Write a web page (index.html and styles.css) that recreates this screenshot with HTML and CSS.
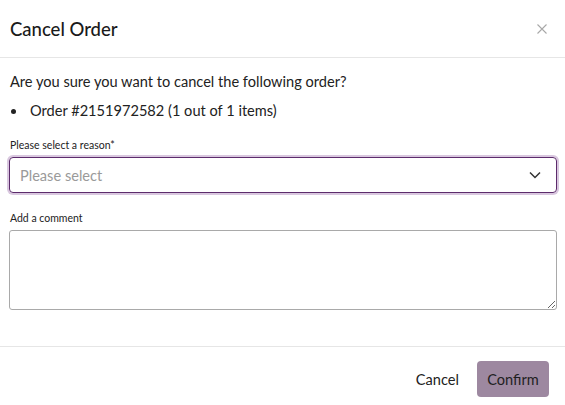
FILE: index.html
```html
<!DOCTYPE html>
<html>
<head>
<meta charset="utf-8">
<link rel="stylesheet" href="styles.css">
</head>
<body>
<div class="modal">
  <div class="header">
    <h1 class="title">Cancel Order</h1>
    <button class="close" aria-label="Close">
      <svg width="10" height="10" viewBox="0 0 10 10"><path d="M0.5 0.5 L9.5 9.5 M9.5 0.5 L0.5 9.5" stroke="#a8a8a8" stroke-width="1.1" fill="none"/></svg>
    </button>
  </div>
  <div class="body">
    <p class="question">Are you sure you want to cancel the following order?</p>
    <ul class="orders">
      <li><span class="dot"></span>Order #2151972582 (1 out of 1 items)</li>
    </ul>
    <label class="label">Please select a reason*</label>
    <div class="select">
      <span class="placeholder">Please select</span>
      <svg class="chev" width="12" height="8" viewBox="0 0 12 8"><path d="M1 1.5 L6 6.5 L11 1.5" stroke="#333" stroke-width="1.5" fill="none"/></svg>
    </div>
    <label class="label label2">Add a comment</label>
    <textarea class="comment"></textarea>
  </div>
  <div class="footer">
    <button class="btn cancel">Cancel</button>
    <button class="btn confirm">Confirm</button>
  </div>
</div>
</body>
</html>
```
FILE: styles.css
```css
* { box-sizing: border-box; }
html, body { margin: 0; padding: 0; background: #fff; }
body { font-family: Lato, "Noto Sans", sans-serif; color: #1f1f1f; width: 565px; height: 405px; overflow: hidden; }
.modal { width: 565px; }
.header { height: 58px; border-bottom: 1px solid #e6e6e6; display: flex; align-items: center; justify-content: space-between; padding: 0 18px 0 10px; }
.title { margin: 0; font-size: 18.5px; font-weight: 500; color: #1a1a1a; }
.close { background: none; border: 0; padding: 0; display: flex; }
.body { padding: 15px 8px 0 9px; height: 289px; border-bottom: 1px solid #e6e6e6; }
.question { margin: 0; font-size: 14.6px; line-height: 18px; padding-left: 1px; color: #222; }
.orders { margin: 11px 0 0; padding: 0; list-style: none; font-size: 14.6px; line-height: 18px; color: #222; }
.orders li { display: flex; align-items: center; }
.dot { width: 5px; height: 5px; border-radius: 50%; background: #222; margin: 0 14px 0 2px; }
.label { display: block; font-size: 10.5px; line-height: 14px; margin-top: 18px; padding-left: 1px; color: #222; }
.label2 { margin-top: 18px; }
.select { margin-top: 5px; height: 36px; border: 1px solid #5c2b6c; border-radius: 4px; box-shadow: 0 0 0 2px #d9c7df; display: flex; align-items: center; justify-content: space-between; padding: 0 15px 0 10px; }
.placeholder { font-size: 14.6px; color: #9a9a9a; }
.comment { display: block; margin-top: 5px; width: 548px; height: 80px; border: 1px solid #a9a9a9; border-radius: 3px; resize: vertical; font-family: inherit; }
.footer { height: 58px; display: flex; align-items: center; justify-content: flex-end; padding-right: 16px; gap: 18px; padding-top: 6px; }
.btn { font-family: inherit; font-size: 14.6px; border: 0; background: none; color: #222; }
.cancel { padding: 0; }
.confirm { background: #9d88a0; border-radius: 4px; width: 72px; height: 36px; padding: 0; color: #1f1f1f; }
```
